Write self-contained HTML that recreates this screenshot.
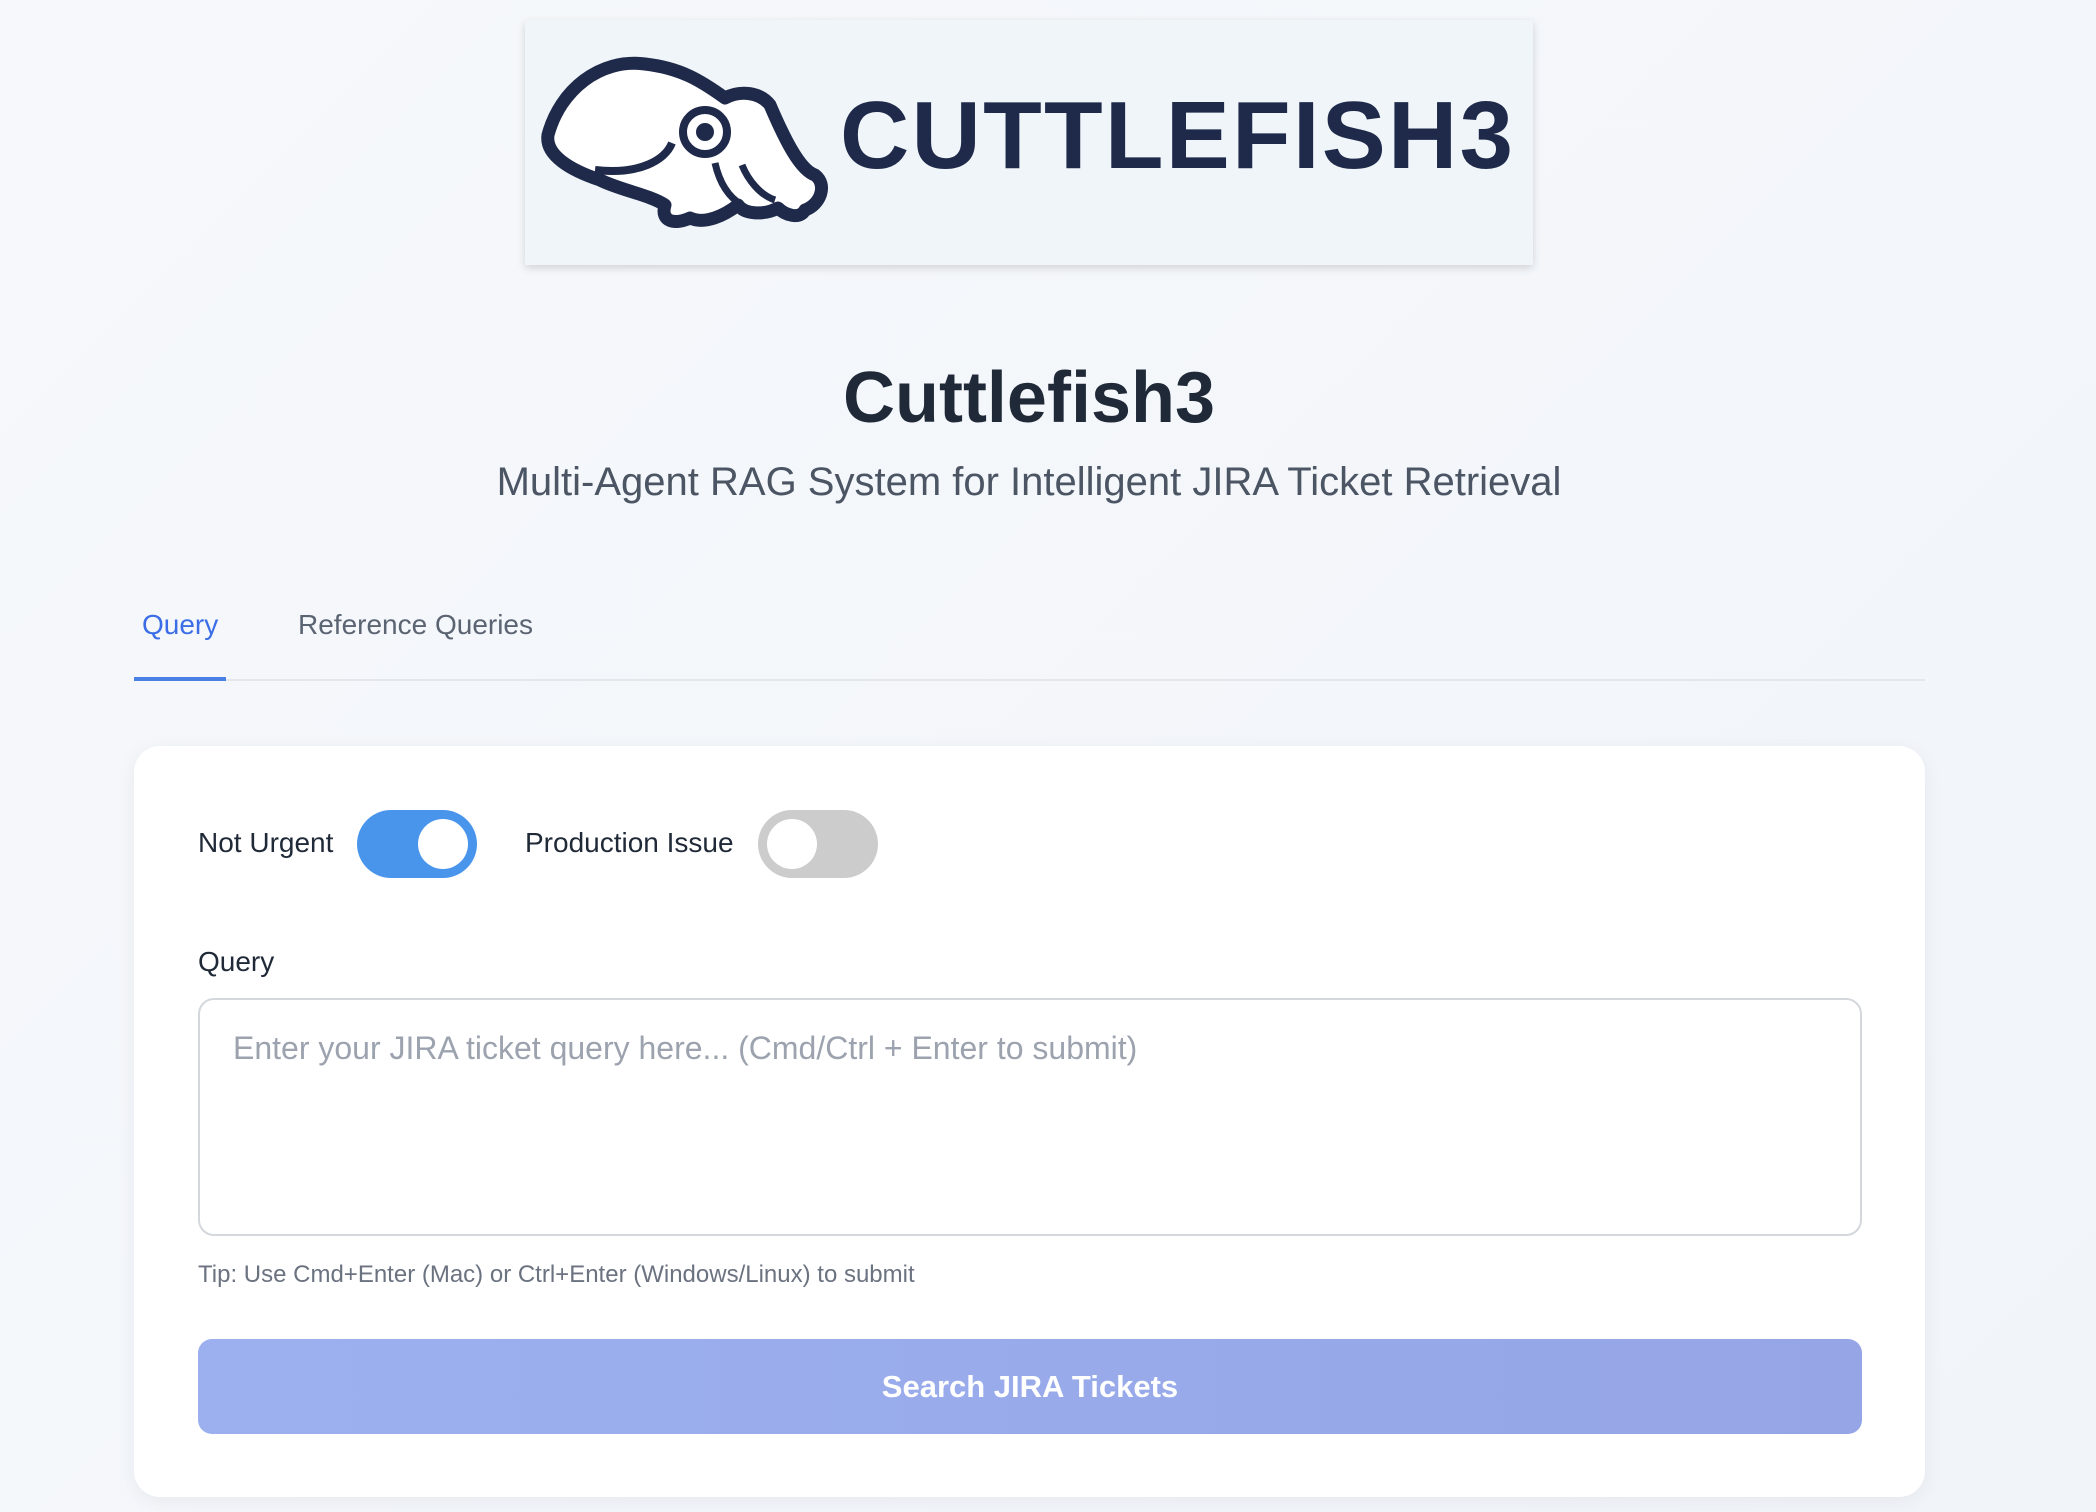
<!DOCTYPE html>
<html><head><meta charset="utf-8"><style>
*{box-sizing:border-box;margin:0;padding:0}
body{width:2096px;height:1512px;overflow:hidden;background:linear-gradient(135deg,#f6f8fb 0%,#f1f5fa 100%);font-family:"Liberation Sans",Arial,sans-serif;position:relative}
.abs{position:absolute}
.logo{left:525px;top:20px;width:1008px;height:245px;background:#eff5f9;box-shadow:0 3px 8px rgba(0,0,0,.15)}
h1{position:absolute;left:0;width:2058px;text-align:center;top:357px;font-size:72px;font-weight:bold;color:#1f2937}
.sub{left:0;width:2058px;text-align:center;top:460px;font-size:40px;color:#4b5563}
.tab{top:609px;font-size:28px}
.card{left:134px;top:746px;width:1791px;height:751px;background:#fff;border-radius:26px;box-shadow:0 4px 20px rgba(0,0,0,.06)}
.lbl{font-size:28px;color:#1f2937}
.tg{width:120px;height:68px;border-radius:34px}
.knob{position:absolute;top:9px;width:50px;height:50px;border-radius:50%;background:#fff}
</style></head><body>
<div class="abs logo"></div>
<svg class="abs" style="left:525px;top:20px" width="1008" height="245" viewBox="525 20 1008 245">
 <g fill="#fff" stroke="#1f2a4a" stroke-width="13" stroke-linejoin="round">
  <path d="M548 135 C560 90 600 58 645 64 C680 68 700 80 725 98 C740 90 760 92 770 105 C785 140 800 170 815 175 C828 185 820 205 805 210 C800 220 785 215 778 208 C765 215 745 215 738 205 C725 215 705 225 690 218 C675 225 660 222 665 205 C650 195 620 190 600 180 C570 170 545 155 548 135 Z"/>
 </g>
 <circle cx="705" cy="132" r="22" fill="#fff" stroke="#1f2a4a" stroke-width="8"/>
 <circle cx="705" cy="132" r="9" fill="#1f2a4a"/>
 <path d="M595 170 C640 175 665 160 672 143" fill="none" stroke="#1f2a4a" stroke-width="8"/>
 <path d="M715 163 C720 185 730 198 742 205 M742 165 C748 180 760 195 775 200" fill="none" stroke="#1f2a4a" stroke-width="7"/>
 <text x="840" y="168" font-family="Liberation Sans" font-weight="bold" font-size="96" fill="#1f2a4a" textLength="673" lengthAdjust="spacing">CUTTLEFISH3</text>
</svg>
<h1>Cuttlefish3</h1>
<div class="abs sub">Multi-Agent RAG System for Intelligent JIRA Ticket Retrieval</div>
<div class="abs tab" style="left:142px;color:#3b6ee6">Query</div>
<div class="abs tab" style="left:298px;color:#5b6472">Reference Queries</div>
<div class="abs" style="left:134px;top:679px;width:1791px;height:2px;background:#e3e6ea"></div>
<div class="abs" style="left:134px;top:677px;width:92px;height:4px;background:#4a7fe6"></div>
<div class="abs card"></div>
<div class="abs lbl" style="left:198px;top:827px">Not Urgent</div>
<div class="abs tg" style="left:357px;top:810px;background:#4a95ec"><div class="knob" style="left:61px"></div></div>
<div class="abs lbl" style="left:525px;top:827px">Production Issue</div>
<div class="abs tg" style="left:758px;top:810px;background:#cccccc"><div class="knob" style="left:9px"></div></div>
<div class="abs lbl" style="left:198px;top:946px">Query</div>
<div class="abs" style="left:198px;top:998px;width:1664px;height:238px;border:2px solid #d4d7dc;border-radius:16px;background:#fff"></div>
<div class="abs" style="left:233px;top:1030px;font-size:32px;color:#9ca3af">Enter your JIRA ticket query here... (Cmd/Ctrl + Enter to submit)</div>
<div class="abs" style="left:198px;top:1261px;font-size:24px;color:#6b7280">Tip: Use Cmd+Enter (Mac) or Ctrl+Enter (Windows/Linux) to submit</div>
<div class="abs" style="left:198px;top:1339px;width:1664px;height:95px;border-radius:14px;background:linear-gradient(90deg,#9cb0ef,#95a5e6);color:#fff;font-weight:bold;font-size:31px;text-align:center;line-height:95px">Search JIRA Tickets</div>
</body></html>
